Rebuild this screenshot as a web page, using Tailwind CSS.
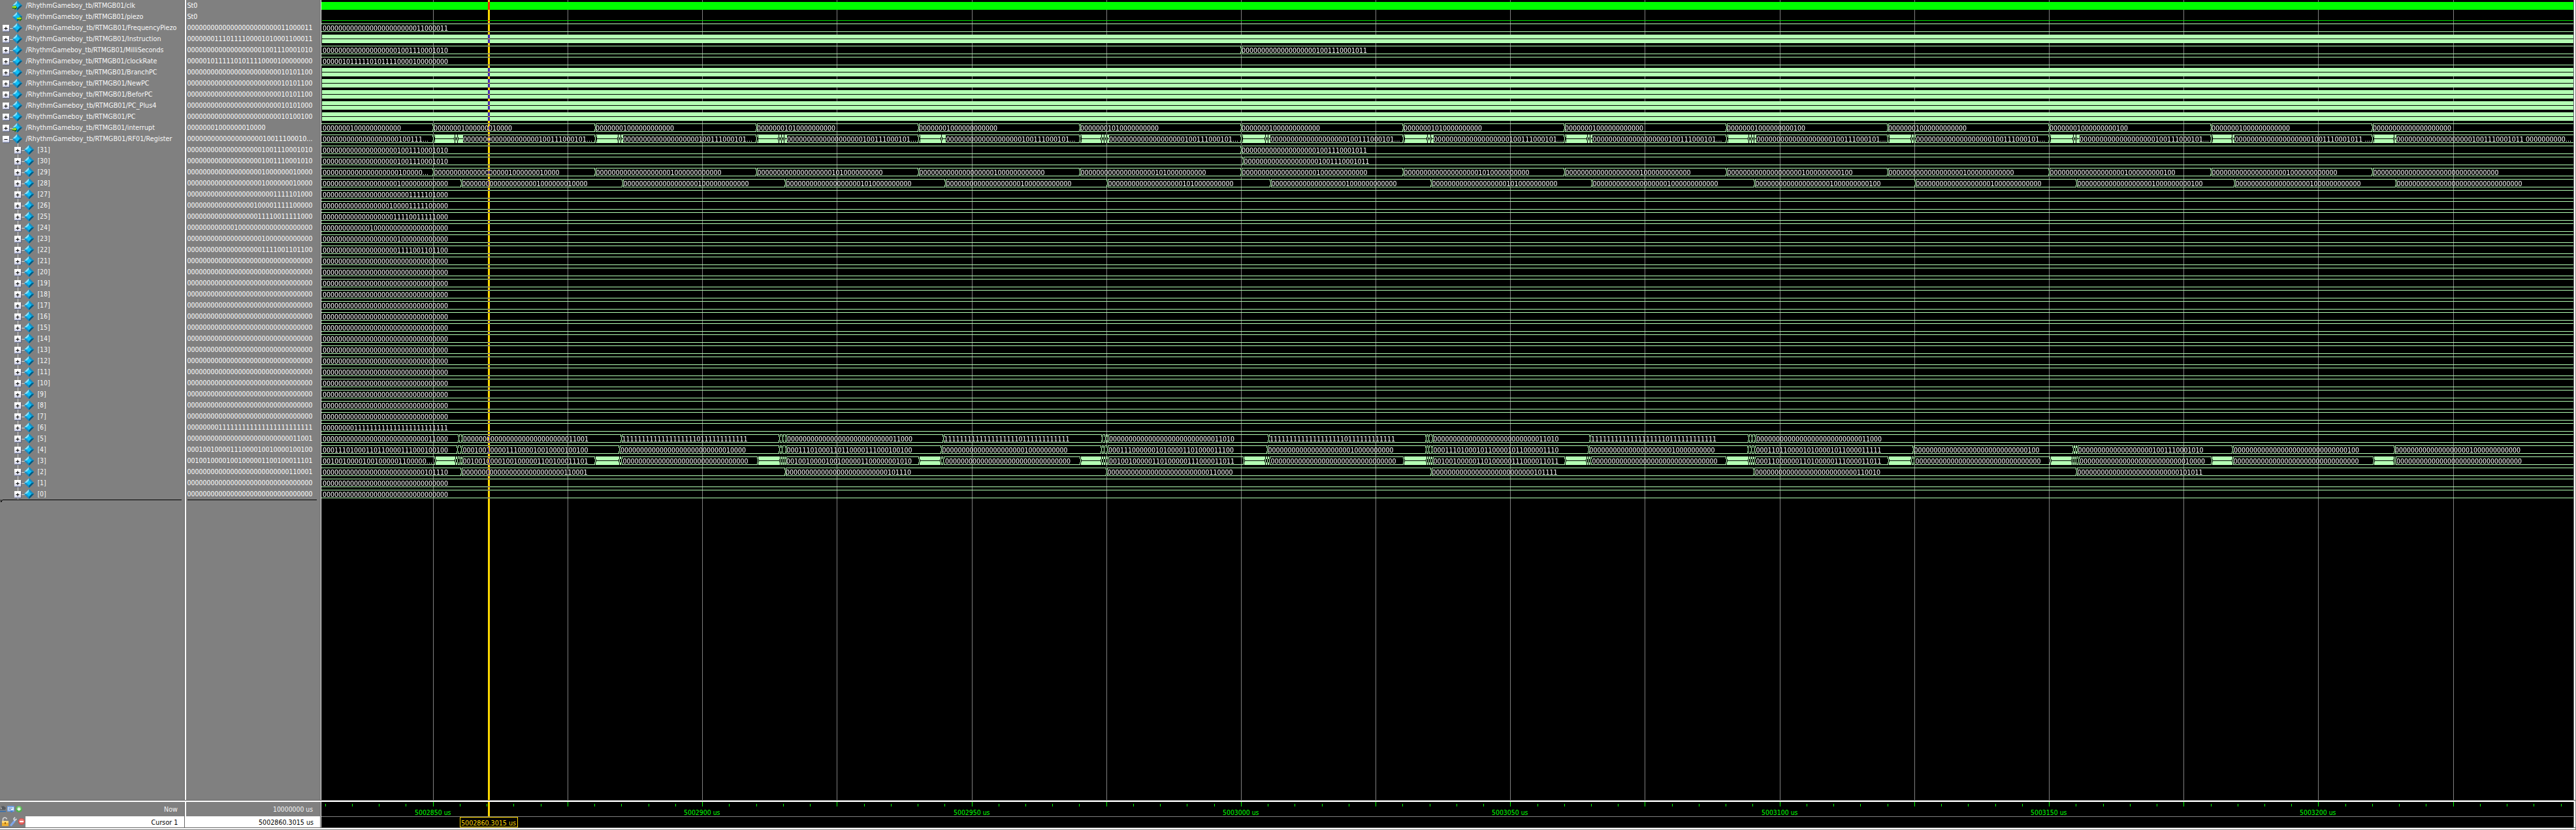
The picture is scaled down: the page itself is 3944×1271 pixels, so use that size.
<!DOCTYPE html>
<html lang="en">
<head>
<meta charset="utf-8">
<title>Wave - Default</title>
<script src="https://cdn.jsdelivr.net/npm/@tailwindcss/browser@4"></script>
</head>
<body class="w-[3944px] h-[1271px] overflow-hidden flex flex-col bg-[#808080] text-[11px] leading-none font-['DejaVu_Sans_Condensed','DejaVu_Sans',sans-serif]">
<svg class="absolute w-0 h-0">
  <defs>
    <linearGradient id="boxg" x1="0" y1="0" x2="0" y2="1"><stop offset="0.4" stop-color="#fff"/><stop offset="1" stop-color="#c8cce6"/></linearGradient>
    <symbol id="gem" viewBox="0 0 16 17">
      <path d="M8 1 L15.5 8.5 L8 16 L.5 8.5Z" fill="#0b7fae"/>
      <path d="M8 1 L.5 8.5 L8 8.5Z" fill="#8fe0f8"/><path d="M8 1 L15.5 8.5 L8 8.5Z" fill="#1591c6"/>
      <path d="M.5 8.5 L8 16 L8 8.5Z" fill="#1a8fc8"/><path d="M15.5 8.5 L8 16 L8 8.5Z" fill="#05587f"/>
      <path d="M8 4.5 L12 8.5 L8 12.5 L4 8.5Z" fill="#0cc0f8"/>
    </symbol>
    <symbol id="arrow" viewBox="0 0 8 8"><path d="M0 2.5H4V0L8 4L4 8V5.5H0Z" fill="#1d6b08"/><path d="M0 2.2H4V.6L7 3.6L4 5V4.2H0Z" fill="#b4f01c"/></symbol>
    <symbol id="plus" viewBox="0 0 11 11"><rect x="1" y="1" width="10" height="10" fill="#5c6480"/><rect width="10" height="10" fill="url(#boxg)"/><path d="M2.5 5.5H7.5M5 3V8" stroke="#000" fill="none"/></symbol>
    <symbol id="minus" viewBox="0 0 11 11"><rect x="1" y="1" width="10" height="10" fill="#5c6480"/><rect width="10" height="10" fill="url(#boxg)"/><path d="M2.5 5.5H7.5" stroke="#000" fill="none"/></symbol>
  </defs>
</svg>

<main class="h-[1225px] flex">
  <section class="w-[282px] flex flex-col">
    <div id="names"></div>
    <svg class="block" width="282" height="12"><path d="M4 .5H278" stroke="#000"/><path d="M1.500 -3V4L4 .5L1.500 -3" stroke="#000" fill="none"/></svg>
  </section>
  <div class="w-[3px] border-l border-[#666] bg-white"></div>
  <section class="w-[205px] flex flex-col">
    <div id="values"></div>
    <div class="ml-0.5 w-[198px] h-px bg-black"></div>
  </section>
  <div class="w-0.5 border-l border-[#666] bg-white"></div>
  <svg id="wave" class="block w-[3448px] h-[1225px] bg-black isolate" viewBox="492 0 3448 1225" shape-rendering="crispEdges"></svg>
  <div class="w-[3px] border-l border-[#666] bg-white"></div>
</main>
<div class="h-[3px] w-[3943px] border-t border-[#666] bg-white"></div>
<footer class="h-[39px] flex">
  <section class="w-[282px] flex flex-col">
    <svg class="block" width="282" height="22" viewBox="0 0 282 22">
      <path d="M0 12L3 9L2 6L5 7L6 12H0M5 6L9 9L8 12H5Z" fill="#55595f"/><path d="M0 14.500H9" stroke="#2f6fb5" stroke-width="1.500"/><path d="M1 9l2 2" stroke="#ccc"/>
      <rect x="11" y="6" width="11" height="9" rx="1" fill="#6f9fe0"/><rect x="12" y="8" width="9" height="5" fill="#dce9fb"/><path d="M13 9.500H19M13 11.500H17" stroke="#5580c0"/><path d="M15 13l3 4 2-4z" fill="#4a80d0"/>
      <circle cx="29" cy="11" r="5" fill="#4fb04c"/><circle cx="29" cy="10" r="3.600" fill="#7fd07a"/><path d="M26.500 11H31.500M29 8.500V13.500" stroke="#fff" stroke-width="1.600"/>
      <text x="251" y="15" fill="#f4f4f4" textLength="21" lengthAdjust="spacingAndGlyphs">Now</text>
    </svg>
    <svg class="block" width="282" height="17" viewBox="0 0 282 17">
      <rect x="39" y="0" width="243" height="17" fill="#fff"/>
      <path d="M4.500 8V5.500A3 3 0 0 1 10.500 4.500" stroke="#d8d8d8" stroke-width="1.500" fill="none"/><rect x="3" y="7" width="10" height="8" fill="#f0b030"/><rect x="3" y="7" width="10" height="3" fill="#ffd878"/><rect x="7" y="9" width="2" height="3" fill="#a06a10"/>
      <path d="M17 13.500L22 7.500" stroke="#7ea6e8" stroke-width="3.200" stroke-linecap="round"/><path d="M25.500 4L22.500 6.500L21 4L23 1.500" stroke="#d4dae2" stroke-width="1.800" fill="none"/>
      <circle cx="33" cy="8" r="5" fill="#d94a48"/><circle cx="33" cy="7.500" r="3.800" fill="#ec7672"/><path d="M30 8H36" stroke="#fff" stroke-width="2"/>
      <text x="231.500" y="13" fill="#000" textLength="41" lengthAdjust="spacingAndGlyphs">Cursor 1</text>
    </svg>
  </section>
  <div class="w-[3px] border-l border-[#666] bg-white"></div>
  <section class="w-[205px] flex flex-col">
    <svg class="block" width="205" height="22"><text x="133" y="15" fill="#f4f4f4" textLength="61" lengthAdjust="spacingAndGlyphs">10000000 us</text></svg>
    <svg class="block bg-white" width="205" height="17"><text x="111" y="13" fill="#000" textLength="84" lengthAdjust="spacingAndGlyphs">5002860.3015 us</text></svg>
  </section>
  <div class="w-0.5 border-l border-[#666] bg-white"></div>
  <svg id="ruler" class="block w-[3448px] h-[39px] bg-black" viewBox="492 1228 3448 39" shape-rendering="crispEdges"></svg>
  <div class="w-[3px] border-l border-[#666] bg-white"></div>
</footer>
<div class="h-[3px] w-[3943px] border-t border-[#666] bg-white"></div>

<script>
const z = n => '0'.repeat(n), o = n => '1'.repeat(n);
const P = '/RhythmGameboy_tb/RTMGB01/';
const signals = [
  [P+'clk', 'St0', 167.5, 'in'], [P+'piezo', 'St0', 180, 'out'],
  [P+'FrequencyPiezo', z(24)+'11000011', 231], [P+'Instruction', '00000001110111100001010001100011', 207],
  [P+'MilliSeconds', z(19)+'1001110001010', 211], [P+'clockRate', '00000101111101011110000100000000', 201],
  [P+'BranchPC', z(24)+'10101100', 201], [P+'NewPC', z(24)+'10101100', 189], [P+'BeforPC', z(24)+'10101100', 194],
  [P+'PC_Plus4', z(24)+'10101000', 200], [P+'PC', z(24)+'10100100', 168],
  [P+'interrupt', '00000001000000010000', 197.5, 'in'], [P+'RF01/Register', z(19)+'10011100010...', 224]
];
const regs = { 31: z(19)+'1001110001010', 30: z(19)+'1001110001010', 29: z(19)+'1000000010000', 28: z(19)+'1000000010000',
  27: z(22)+'1111101000', 26: z(17)+'100001111100000', 25: z(18)+'11110011111000', 24: z(12)+'1'+z(19), 23: z(19)+'1'+z(12),
  22: z(19)+'1111001101100', 6: z(8)+o(24), 5: z(27)+'11001', 4: '00010010000111000010010000100100',
  3: '00100100001001000001100100011101', 2: z(26)+'110001' };
for (let n = 31; n >= 0; n--) signals.push([`[${n}]`, regs[n] || z(32), n > 9 ? 19 : 13]);

/* name and value columns */
let names = '', values = '';
signals.forEach(([name, val, w, dir], i) => {
  const dx = i > 12 ? 18 : 0;
  let g = '';
  if (i > 12) g += '<path d="M27.500 0V17" stroke="#d4d4d4"/>';
  if (i === 12) g += '<path d="M27.500 14V17" stroke="#d4d4d4"/>';
  if (i > 1) g += `<path d="M${14+dx} 9.500H${20+dx}" stroke="#d4d4d4"/><use href="#${i === 12 ? 'minus' : 'plus'}" x="${4+dx}" y="4" width="11" height="11"/>`;
  g += `<use href="#gem" x="${18.500+dx}" y="0" width="16" height="17"/>`;
  if (dir) g += `<use href="#arrow" x="${dir === 'in' ? 18.500 : 26}" y="${dir === 'in' ? 7.500 : 8}" width="8" height="8"/>`;
  names += `<svg class="block" width="282" height="17">${g}<text x="${39.500+dx}" y="12" fill="#f8f8f8" textLength="${w}" lengthAdjust="spacingAndGlyphs">${name}</text></svg>`;
  const vw = val === 'St0' ? 16 : val.length === 20 ? 120 : 192;
  values += `<svg class="block" width="205" height="17"><text x="1.500" y="12" fill="#fff" textLength="${vw}" lengthAdjust="spacingAndGlyphs">${val}</text></svg>`;
});
document.getElementById('names').innerHTML = names;
document.getElementById('values').innerHTML = values;

/* waveforms */
const L = 492, R = 3940, G = '#b4ffb4', grid = [663,869,1075,1281,1488,1694,1900,2106,2312,2518,2725,2931,3137,3343,3549,3756];
const tw = s => { const d = s.endsWith('...'); return 6 * (s.length - (d ? 3 : 0)) - (s.includes(' ') ? 2 : 0) + (d ? 12 : 0); };
const txt = (x, y, s, c, w) => `<text x="${x}" y="${y}" fill="${c}" font-size="11" xml:space="preserve" textLength="${w}" lengthAdjust="spacingAndGlyphs">${s}</text>`;
let s = '';
grid.forEach(x => s += `<path d="M${x+.5} 0V1225" stroke="#808080"/>`);
const cross = (x, t) => { x = Math.round(x);
  return `<rect x="${x-1}" y="${t}" width="3" height="13" fill="#000"/><path d="M${x-.5} ${t}v4M${x+.5} ${t+4}v5M${x-.5} ${t+9}v4M${x+1.5} ${t}v4M${x+1.5} ${t+9}v4" stroke="${G}"/>`; };
const bus = (i, labels, marks = [], dense = []) => {
  const t = 17 * i + 2;
  s += `<path d="M${L} ${t+.5}H${R}M${L} ${t+12.5}H${R}" stroke="${G}"/>`;
  dense.forEach(([a, b]) => {
    s += `<rect x="${a}" y="${t}" width="${b-a}" height="13" fill="${G}"/><path d="M${a} ${t+6.5}H${b}" stroke="#000"/>`; });
  marks.forEach(x => s += cross(x, t));
  labels.forEach(([x, v]) => s += txt(x, t + 11, v, '#fff', tw(v)));
};
const solid = i => { const t = 17 * i + 2; s += `<rect x="493" y="${t}" width="${R-493}" height="6" fill="${G}"/><rect x="493" y="${t+6}" width="${R-493}" height="1" fill="#000"/><rect x="493" y="${t+7}" width="${R-493}" height="6" fill="${G}"/>`; };

s += `<rect x="492" y="3" width="${R-492}" height="12" fill="#0f0"/><path d="M493 31.500H${R}" stroke="#00e000"/>`;
const T0 = 494, mid = [663,911,1158,1406,1653,1900,2148,2395,2643,2890,3137,3385,3632];
const tails = ['1000000000000','1000000010000','1000000000000','1010000000000','1000000000000','1010000000000','1000000000000','1010000000000','1000000000000','1000000000100','1000000000000','1000000000100','1000000000000','0000000000000'];
const M0 = z(19)+'1001110001010', M1 = z(19)+'1001110001011';
bus(2, [[T0, signals[2][1]]]);
[3,6,7,8,9,10].forEach(solid);
bus(4, [[T0, M0], [1901, M1]], [1900]);
bus(5, [[T0, signals[5][1]]]);
bus(11, tails.map((v, k) => [k ? mid[k-1] + 1 : T0, z(7) + v]), mid);

const rt = [709,954,1205,1448.500,1698,1945.500,2195,2438.500,2689.500,2933.500,3184,3421.500,3669];
const split = [[696,700],[946,950],[1192,1196,1200],[1441],[1686,1690,1694],[1937,1941],[2185,2190],[2430,2434],[2677,2681,2685],[2926,2930],[3174,3178],[3417],[3665]];
bus(12, [[T0, z(19)+'100111...'], ...rt.map((x, k) => [x, k === 11 ? M1 + ' ...' : k === 12 ? M1 + ' 0000000000...' : z(19)+'100111000101...'])],
  [...mid, ...split.flat()], mid.map((x, k) => [x + 3, Math.floor(rt[k])]));
bus(13, [[T0, M0], [1901, M1]], [1900]);
bus(14, [[T0, M0], [1904.500, M1]], [1903]);
bus(15, tails.map((v, k) => [k ? mid[k-1] + 1.5 : T0, k ? z(19) + v : z(19)+'100000...']), mid);
const m28 = [706,953,1202,1447,1695,1945,2191,2437,2686,2932,3179,3421,3668];
bus(16, tails.map((v, k) => [k ? m28[k-1] + 1.5 : T0, z(19) + v]), m28);
for (let i = 17; i <= 38; i++) bus(i, [[T0, signals[i][1]]]);

const F = o(19)+'0'+o(12), a = z(27)+'11000', b = z(27)+'11010', e = z(21)+'1'+z(10), h = z(29)+'100';
bus(39, [[T0,a],[709,z(27)+'11001'],[952.500,F],[1205,a],[1445.500,F],[1698,b],[1944,F],[2194.500,b],[2436,F],[2689,a]],
  [702,707,951,1193,1198,1203,1444,1687,1692,1696,1942,2183,2187,2193,2434,2677,2682,2687]);
const r4 = '00011101000110110000111000100100';
bus(40, [[T0,r4],[708.500,regs[4]],[950,z(27)+'10000'],[1204.500,r4],[1442.500,e],[1697,'00011100000010100001101000011100'],[1941.500,e],
  [2194.500,'00011101000101100001011000001110'],[2433.500,e],[2688.500,'00011011000010100001011000011111'],[2930.500,h],[3181.500,M0],[3420,h],[3667,z(19)+'1'+z(12)]],
  [700,706,948,1193,1197,1203,1441,1686,1690,1695,1940,2183,2187,2192,2432,2676,2681,2686,2929,3174,3177,3180,3418,3666]);
const r3 = '00100100000110100000111000011011';
const dn = [[667,696],[912,947],[1161,1193],[1408,1439],[1655,1685],[1905,1936],[2150,2183],[2397,2428],[2644,2676],[2892,2925],[3140,3171],[3387,3417],[3635,3664]];
bus(41, [[T0,'00100100001001000001100000...'],[708.500,regs[3]],[953.500,z(32)],[1204,'00100100001001000001100000001010'],[1447,z(32)],[1698,r3],[1945.500,z(32)],
  [2194.500,r3],[2437.500,z(32)],[2688.500,'00011000000110100000111000011011'],[2932.500,z(32)],[3184,z(27)+'10000'],[3419.500,z(32)],[3669,z(32)]],
  [...dn.map(d => d[0] - 1), ...dn.map(d => d[1] + 1), 700,704,707,951,1197,1200,1203,1444,1689,1692,1696,1940,1943,2187,2190,2193,2432,2435,2680,2683,2686,2930,3175,3178,3182,3667], dn);
bus(42, [[T0,z(26)+'101110'],[707.500,z(26)+'110001'],[1203,z(26)+'101110'],[1695.500,z(26)+'110000'],[2192.500,z(26)+'101111'],[2687,z(26)+'110010'],[3180.500,z(26)+'101011']],
  [706,1202,1694,2191,2685,3179]);
bus(43, [[T0, z(32)]]); bus(44, [[T0, z(32)]]);
s += '<rect x="747" y="0" width="3" height="1225" fill="#ffd700" style="mix-blend-mode:difference"/>';
document.getElementById('wave').innerHTML = s;

/* time ruler */
let r = '';
for (let k = -4; k <= 79; k++) {
  const major = k % 5 === 0 && grid[k / 5] !== undefined, x = major ? grid[k / 5] : Math.floor(663.200 + 41.240 * k);
  r += `<rect x="${x}" y="${major ? 1228 : 1231}" width="1" height="${major ? 7 : 4}" fill="#0f0"/>`;
}
grid.forEach((x, k) => { if (k % 2 === 0) r += txt(x - 28, 1248, (5002850 + 25 * k) + ' us', '#0f0', 55.500); });
r += `<rect x="747" y="1228" width="3" height="22" fill="#ffd700"/><rect x="492" y="1250" width="3448" height="1" fill="#808080"/>
<rect x="704.500" y="1251.500" width="88" height="15" fill="#000" stroke="#ffd700"/>` + txt(706, 1264, '5002860.3015 us', '#ffd700', 84);
document.getElementById('ruler').innerHTML = r;
</script>
</body>
</html>
